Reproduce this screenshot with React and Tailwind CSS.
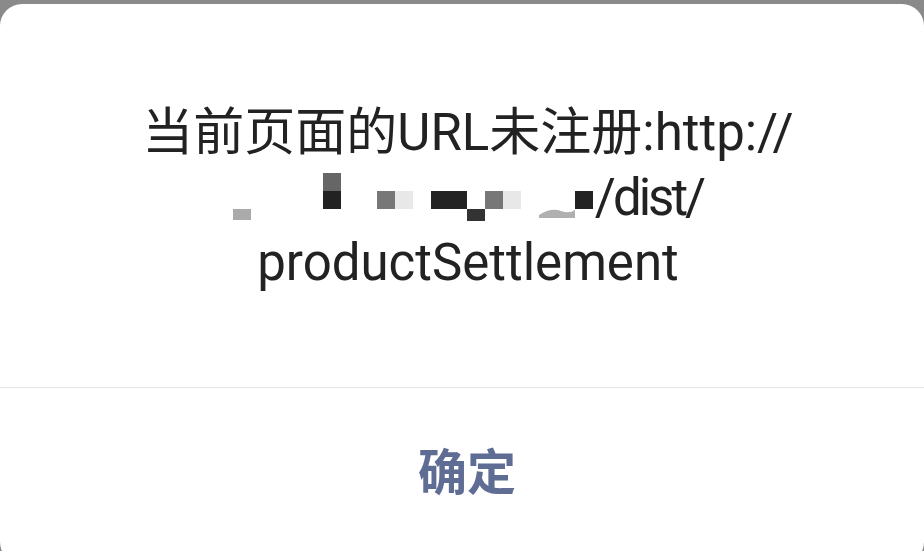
import React from 'react';

// pixelated redaction blocks that hide part of the url
const Mosaic = () => (
    <svg width="362" height="50" viewBox="234 178 362 50" className="inline-block align-[-6px]">
        <rect x="234" y="216" width="18" height="11" fill="#aaaaaa" />
        <rect x="324" y="180" width="18" height="18" fill="#666666" />
        <rect x="324" y="198" width="18" height="18" fill="#222222" />
        <rect x="378" y="198" width="18" height="18" fill="#777777" />
        <rect x="396" y="198" width="18" height="18" fill="#e8e8e8" />
        <rect x="432" y="198" width="36" height="18" fill="#222222" />
        <rect x="468" y="216" width="18" height="12" fill="#333333" />
        <rect x="486" y="198" width="18" height="18" fill="#777777" />
        <rect x="504" y="198" width="18" height="18" fill="#e8e8e8" />
        <path d="M540 222 Q552 214 562 218 Q570 221 576 217 L576 225 L540 225 Z" fill="#b0b0b0" />
        <rect x="576" y="198" width="18" height="18" fill="#222222" />
    </svg>
);

const App = () => {
    return (
        <div className="w-[924px] h-[551px] bg-[#8a8a8a] pt-[4px] overflow-hidden">
            <div className="h-[560px] bg-white rounded-[22px] flex flex-col">
                <div className="h-[384px] flex items-center justify-center border-b border-[#e6e6e6]">
                    <div
                        className="text-center text-[51px] leading-[65px] text-[#222222] pl-[12px] pt-[4px]"
                        style={{ fontFamily: 'Roboto, "Noto Sans CJK SC", sans-serif' }}
                    >
                        <div className="whitespace-nowrap">当前页面的URL未注册:http://</div>
                        <div className="whitespace-nowrap tracking-[-3px]">
                            <Mosaic />/dist/
                        </div>
                        <div>productSettlement</div>
                    </div>
                </div>
                <div className="h-[166px] flex items-center justify-center pb-[4px] pl-[10px]">
                    <button
                        className="text-[49px] font-bold text-[#5f6d94]"
                        style={{ fontFamily: '"Noto Sans CJK SC", sans-serif' }}
                    >
                        确定
                    </button>
                </div>
            </div>
        </div>
    );
};

export default App;
